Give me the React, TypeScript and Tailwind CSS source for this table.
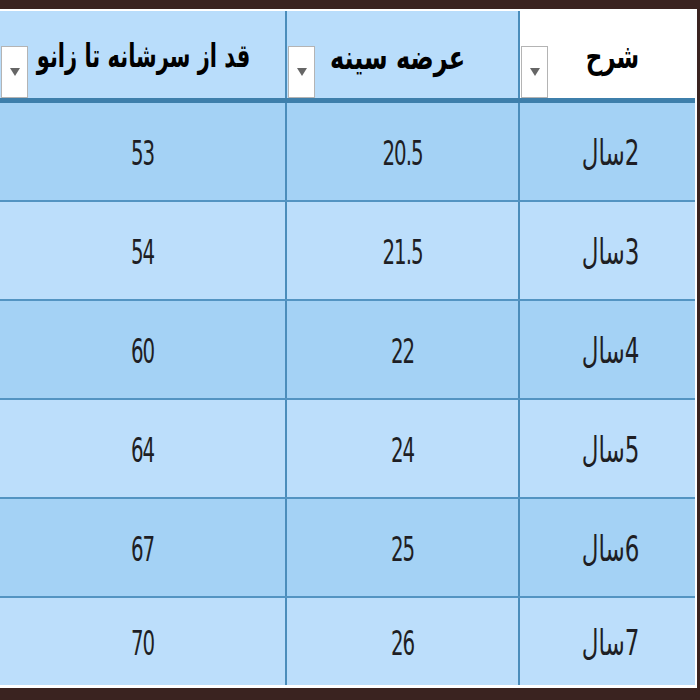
const rows = [
  { label: '2سال', chest: '20.5', height: '53' },
  { label: '3سال', chest: '21.5', height: '54' },
  { label: '4سال', chest: '22', height: '60' },
  { label: '5سال', chest: '24', height: '64' },
  { label: '6سال', chest: '25', height: '67' },
  { label: '7سال', chest: '26', height: '70' },
];

const FilterButton = () => (
  <div className="absolute bottom-0 left-[1px] w-[27px] h-[52px] bg-white border border-[#b4b4b4] flex items-center justify-center">
    <svg width="10" height="8" viewBox="0 0 10 8">
      <path d="M0 0 L10 0 L5 8 Z" fill="#666" />
    </svg>
  </div>
);

const App = () => {
  return (
    <div className="w-[700px] h-[700px] bg-[#3a2320] pt-[9px] pb-[12px] overflow-hidden">
      <div className="h-full bg-white pt-[2px] pb-[3px] pr-[2px] mr-[3px]">
        <div
          className="h-full flex flex-col bg-[#bcdefb]"
          style={{ fontFamily: '"DejaVu Sans", sans-serif' }}
        >
          <div className="grid grid-cols-[285px_231px_1fr] gap-x-[2px] bg-[#4b8dbb] h-[92px] shrink-0 border-b-[5px] border-[#3e7fab]">
            <div className="relative bg-[#b9ddfb] flex items-center justify-center">
              <FilterButton />
              <span dir="rtl" className="inline-block font-bold text-[21px] text-black scale-y-[1.55] translate-y-[3px] pl-[2px]">
                قد از سرشانه تا زانو
              </span>
            </div>
            <div className="relative bg-[#b9ddfb] flex items-center justify-center">
              <FilterButton />
              <span dir="rtl" className="inline-block font-bold text-[24px] text-black scale-y-[1.4] translate-y-[3px] pr-[10px]">
                عرضه سینه
              </span>
            </div>
            <div className="relative bg-white flex items-center justify-center">
              <FilterButton />
              <span dir="rtl" className="inline-block font-bold text-[23px] text-black scale-y-[1.45] translate-y-[3px] pl-[10px]">
                شرح
              </span>
            </div>
          </div>
          {rows.map((r, i) => (
            <div
              key={r.label}
              className={`grid grid-cols-[285px_231px_1fr] gap-x-[2px] bg-[#4b8dbb] ${
                i === rows.length - 1 ? 'flex-1' : 'h-[99px] shrink-0 border-b-2 border-[#5394c2]'
              }`}
            >
              {[r.height, r.chest, r.label].map((v, j) => (
                <div
                  key={j}
                  className={`flex items-center justify-center ${i % 2 === 0 ? 'bg-[#a4d2f5]' : 'bg-[#bcdefb]'}`}
                >
                  <span
                    dir={j === 2 ? 'rtl' : 'ltr'}
                    className={`inline-block text-[#1e1e24] scale-y-[1.55] translate-y-[2px] ${
                      j === 2 ? 'text-[23px] pl-[6px]' : 'text-[22px] tracking-[-1px]'
                    }`}
                    style={{ fontFamily: j === 2 ? '"DejaVu Sans", sans-serif' : '"DejaVu Sans Condensed", "Liberation Sans Narrow", sans-serif' }}
                  >
                    {v}
                  </span>
                </div>
              ))}
            </div>
          ))}
        </div>
      </div>
    </div>
  );
};

export default App;
